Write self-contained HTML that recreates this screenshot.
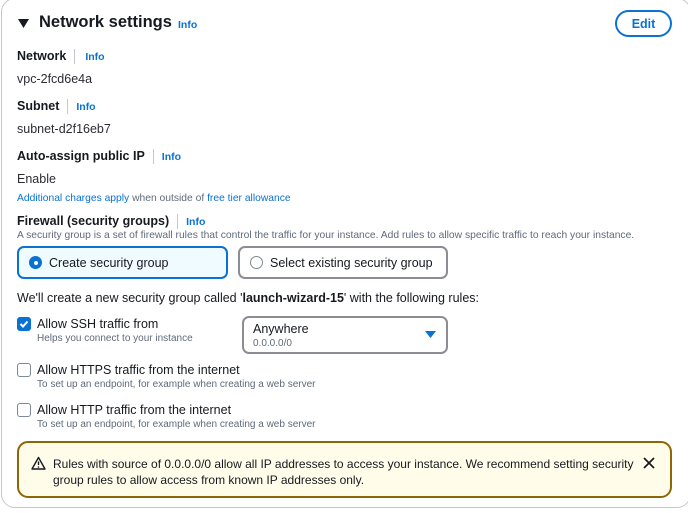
<!DOCTYPE html>
<html><head><meta charset="utf-8"><style>
*{margin:0;padding:0;box-sizing:border-box}
body{width:688px;height:513px;background:#fff;font-family:"Liberation Sans",sans-serif;color:#16191f;position:relative;overflow:hidden}
.card{position:absolute;left:1px;top:-2px;width:690px;height:510px;border:1px solid #c6c6cd;border-radius:14px}
.a{position:absolute;white-space:nowrap}
.lbl{font-size:12.5px;font-weight:bold;color:#16191f}
.info{font-size:10.5px;font-weight:bold;color:#0972d3}
.sep{display:inline-block;width:1px;height:15px;background:#c6c6cd;vertical-align:middle;margin:0 8px 0 8px}
.val{font-size:12.5px;color:#2c2c33}
.small{font-size:10px;color:#5f6b7a}
.cb{position:absolute;width:14px;height:14px;border:1.5px solid #7d8998;border-radius:3px;background:#fff}
</style></head><body>
<div class="card"></div>
<svg class="a" style="left:18px;top:18px" width="12" height="11"><path d="M0 1 L11 1 L5.5 10 Z" fill="#16191f"/></svg>
<div class="a" style="left:39px;top:13px;font-size:16.5px;font-weight:bold">Network settings</div>
<div class="a info" style="left:178px;top:19px">Info</div>
<div class="a" style="left:615px;top:10px;width:57px;height:27px;border:2px solid #0972d3;border-radius:14px;color:#0972d3;font-weight:bold;font-size:12.5px;text-align:center;line-height:24px">Edit</div>

<div class="a lbl" style="left:17px;top:49px">Network<span class="sep"></span><span class="info" style="margin-left:2px">Info</span></div>
<div class="a val" style="left:17px;top:72px">vpc-2fcd6e4a</div>
<div class="a lbl" style="left:17px;top:99px">Subnet<span class="sep"></span><span class="info" style="margin-left:0px">Info</span></div>
<div class="a val" style="left:17px;top:122px">subnet-d2f16eb7</div>
<div class="a lbl" style="left:17px;top:149px">Auto-assign public IP<span class="sep"></span><span class="info" style="margin-left:0px">Info</span></div>
<div class="a val" style="left:17px;top:172px">Enable</div>
<div class="a" style="left:17px;top:193px;font-size:10.3px;color:#5f6b7a"><span style="color:#0972d3">Additional charges apply</span> when outside of <span style="color:#0972d3">free tier allowance</span></div>
<div class="a lbl" style="left:17px;top:214px">Firewall (security groups)<span class="sep"></span><span class="info" style="margin-left:0px">Info</span></div>
<div class="a" style="left:17px;top:230px;font-size:10.3px;color:#5f6b7a">A security group is a set of firewall rules that control the traffic for your instance. Add rules to allow specific traffic to reach your instance.</div>

<div class="a" style="left:17px;top:246px;width:211px;height:33px;border:2px solid #0972d3;border-radius:7px;background:#f0fbff"></div>
<div class="a" style="left:29px;top:256px;width:13px;height:13px;border-radius:50%;background:#0972d3"></div>
<div class="a" style="left:33.5px;top:260.5px;width:4px;height:4px;border-radius:50%;background:#fff"></div>
<div class="a val" style="left:49px;top:256px;color:#16191f">Create security group</div>
<div class="a" style="left:238px;top:246px;width:210px;height:33px;border:2px solid #8c8c94;border-radius:7px"></div>
<div class="a" style="left:250px;top:256px;width:13px;height:13px;border-radius:50%;border:1.5px solid #7d8998"></div>
<div class="a val" style="left:270px;top:256px;color:#16191f">Select existing security group</div>

<div class="a val" style="left:17px;top:291px;color:#16191f">We'll create a new security group called '<b>launch-wizard-15</b>' with the following rules:</div>

<div class="cb" style="left:17px;top:317px;background:#0972d3;border-color:#0972d3"></div>
<svg class="a" style="left:17px;top:317px" width="14" height="14"><path d="M3.5 7 L6 9.5 L10.5 4.5" stroke="#fff" stroke-width="2" fill="none"/></svg>
<div class="a val" style="left:37px;top:317px;color:#16191f">Allow SSH traffic from</div>
<div class="a small" style="left:37px;top:333px">Helps you connect to your instance</div>
<div class="a" style="left:242px;top:316px;width:206px;height:38px;border:2px solid #8c8c94;border-radius:7px"></div>
<div class="a val" style="left:253px;top:322px;color:#16191f">Anywhere</div>
<div class="a" style="left:253px;top:338px;font-size:10px;color:#5f6b7a">0.0.0.0/0</div>
<svg class="a" style="left:425px;top:331px" width="11" height="8"><path d="M0 0 L11 0 L5.5 7 Z" fill="#0972d3"/></svg>

<div class="cb" style="left:17px;top:363px"></div>
<div class="a val" style="left:37px;top:363px;color:#16191f">Allow HTTPS traffic from the internet</div>
<div class="a small" style="left:37px;top:379px">To set up an endpoint, for example when creating a web server</div>
<div class="cb" style="left:17px;top:403px"></div>
<div class="a val" style="left:37px;top:403px;color:#16191f">Allow HTTP traffic from the internet</div>
<div class="a small" style="left:37px;top:419px">To set up an endpoint, for example when creating a web server</div>

<div class="a" style="left:17px;top:441px;width:655px;height:57px;border:2px solid #8d6605;border-radius:11px;background:#fffce9"></div>
<svg class="a" style="left:31px;top:456px" width="15" height="14"><path d="M7.5 1.5 L14 13 L1 13 Z" fill="none" stroke="#16191f" stroke-width="1.4" stroke-linejoin="round"/><path d="M7.5 5.5 V9" stroke="#16191f" stroke-width="1.4"/><circle cx="7.5" cy="11" r="0.8" fill="#16191f"/></svg>
<div class="a" style="left:53px;top:456px;font-size:12px;color:#16191f;line-height:16px">Rules with source of 0.0.0.0/0 allow all IP addresses to access your instance. We recommend setting security<br>group rules to allow access from known IP addresses only.</div>
<svg class="a" style="left:643px;top:457px" width="12" height="12"><path d="M1 1 L11 11 M11 1 L1 11" stroke="#16191f" stroke-width="1.7"/></svg>
</body></html>
